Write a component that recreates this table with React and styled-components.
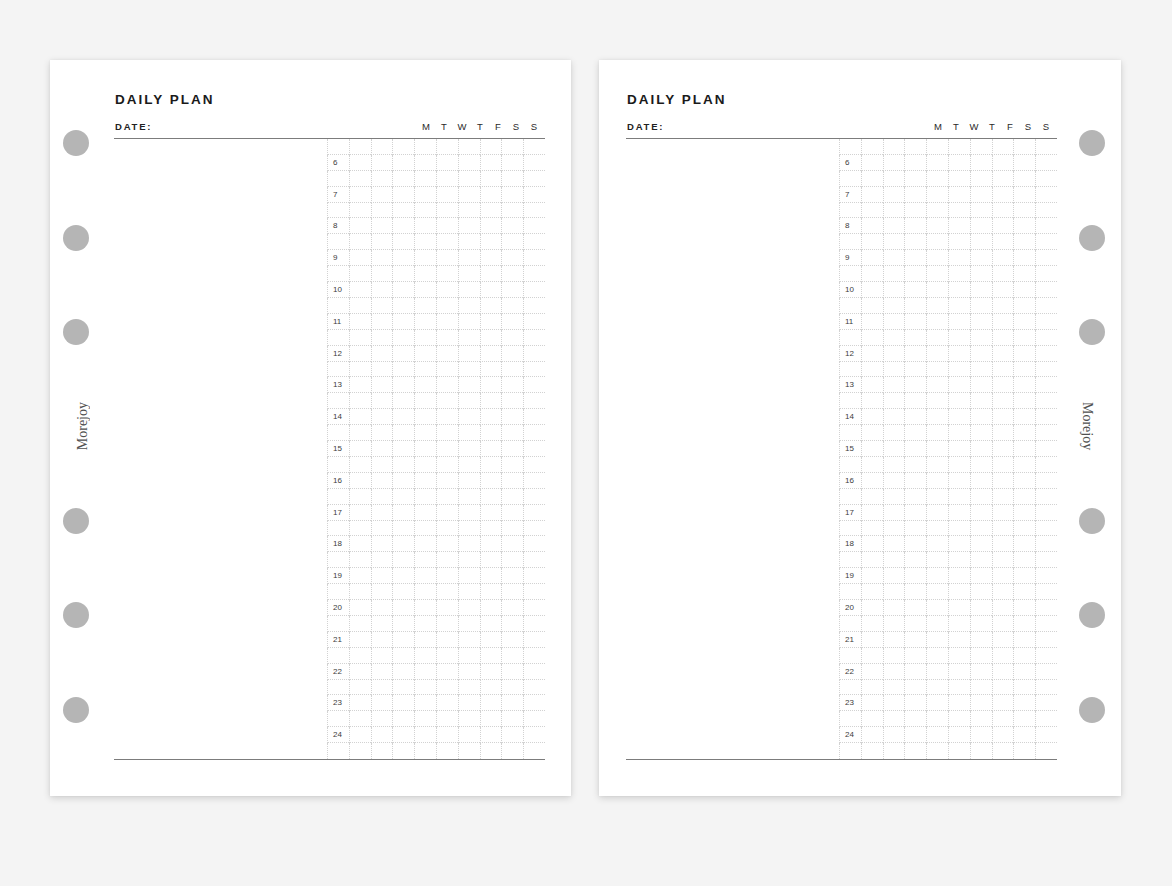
import React from 'react';
import styled, { createGlobalStyle } from 'styled-components';

const Global = createGlobalStyle`
  html, body { margin: 0; padding: 0; background: #f4f4f4; }
  body { font-family: "Liberation Sans", Arial, sans-serif; }
`;

const Spread = styled.main`
  display: flex;
  gap: 28px;
  padding: 60px 0 0 50px;
  min-height: 886px;
  box-sizing: border-box;
`;

const Page = styled.section`
  display: flex;
  flex-direction: ${p => (p.$side === 'left' ? 'row' : 'row-reverse')};
  flex-shrink: 0;
  width: ${p => p.$width}px;
  height: 736px;
  box-sizing: border-box;
  padding-right: ${p => (p.$side === 'left' ? 26 : 0)}px;
  padding-left: ${p => (p.$side === 'left' ? 0 : 27)}px;
  background: #ffffff;
  box-shadow: 0 2px 7px rgba(0, 0, 0, 0.16), 0 0 2px rgba(0, 0, 0, 0.06);
`;

const Rail = styled.div`
  width: 64px;
  flex-shrink: 0;
  display: flex;
  flex-direction: column;
  box-sizing: border-box;
  padding-top: 36px;
  padding-left: ${p => p.$inset}px;
`;

const Slot = styled.div`
  width: 26px;
  height: 94.4px;
  display: flex;
  align-items: center;
  justify-content: center;
`;

const Hole = styled.div`
  width: 26px;
  height: 26px;
  border-radius: 50%;
  background: #b5b5b5;
`;

const Brand = styled.span`
  font-family: "Liberation Serif", "DejaVu Serif", serif;
  font-size: 14px;
  line-height: 16px;
  color: #505050;
  white-space: nowrap;
  writing-mode: vertical-rl;
  transform: ${p => (p.$flip ? 'rotate(180deg)' : 'none')};
  margin-left: ${p => p.$shift * 2}px;
`;

const Content = styled.div`
  width: 431px;
  flex-shrink: 0;
  display: flex;
  flex-direction: column;
  padding-top: 32px;
`;

const Title = styled.h1`
  margin: 0;
  padding-left: 1px;
  font-size: 13.5px;
  line-height: 16px;
  font-weight: 700;
  letter-spacing: 2px;
  color: #1a1a1a;
`;

const HeadRow = styled.div`
  display: flex;
  justify-content: space-between;
  align-items: flex-end;
  height: 31px;
  box-sizing: border-box;
  padding: 0 2px 5px 1px;
  border-bottom: 1px solid #7c7c7c;
`;

const DateLabel = styled.span`
  font-size: 9.5px;
  line-height: 12px;
  font-weight: 700;
  letter-spacing: 1.8px;
  color: #222;
`;

const Days = styled.div`
  display: flex;
`;

const Day = styled.span`
  width: 18px;
  text-align: center;
  font-size: 9.5px;
  line-height: 12px;
  color: #2a2a2a;
`;

const Body = styled.div`
  display: flex;
  height: 621px;
  box-sizing: border-box;
  border-bottom: 1px solid #7c7c7c;
`;

const Notes = styled.div`
  flex: 1;
`;

const Grid = styled.div`
  width: 218px;
  display: grid;
  grid-template-columns: repeat(10, 1fr);
  grid-template-rows: repeat(39, 1fr);
`;

const Cell = styled.div`
  display: flex;
  align-items: center;
  padding-left: 5px;
  border-left: 1px dotted #d2d2d2;
  border-bottom: ${p => (p.$last ? 'none' : '1px dotted #d2d2d2')};
  font-size: 8px;
  color: #3c3c3c;
  overflow: hidden;
`;

const DAYS = ['M', 'T', 'W', 'T', 'F', 'S', 'S'];
const ROWS = 39;
const COLS = 10;

function PlanGrid() {
  const cells = [];
  for (let r = 0; r < ROWS; r++) {
    for (let c = 0; c < COLS; c++) {
      const label = c === 0 && r % 2 === 1 ? String(6 + (r - 1) / 2) : '';
      cells.push(
        <Cell key={`${r}-${c}`} $last={r === ROWS - 1}>
          {label}
        </Cell>
      );
    }
  }
  return <Grid>{cells}</Grid>;
}

function PlannerPage({ side, width }) {
  const left = side === 'left';
  return (
    <Page $side={side} $width={width}>
      <Rail $inset={left ? 13 : 22}>
        {[0, 1, 2, 3, 4, 5, 6].map(i => (
          <Slot key={i}>
            {i === 3 ? (
              <Brand $flip={left} $shift={left ? 7 : -5}>Morejoy</Brand>
            ) : (
              <Hole />
            )}
          </Slot>
        ))}
      </Rail>
      <Content>
        <Title>DAILY PLAN</Title>
        <HeadRow>
          <DateLabel>DATE:</DateLabel>
          <Days>
            {DAYS.map((d, i) => (
              <Day key={i}>{d}</Day>
            ))}
          </Days>
        </HeadRow>
        <Body>
          <Notes />
          <PlanGrid />
        </Body>
      </Content>
    </Page>
  );
}

export default function App() {
  return (
    <>
      <Global />
      <Spread>
        <PlannerPage side="left" width={521} />
        <PlannerPage side="right" width={522} />
      </Spread>
    </>
  );
}
